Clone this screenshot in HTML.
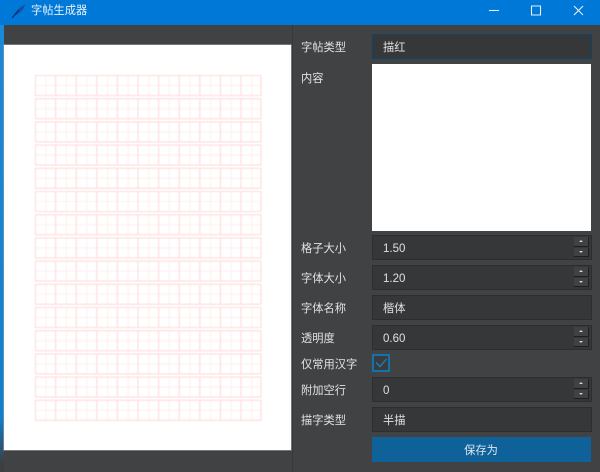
<!DOCTYPE html>
<html lang="zh">
<head>
<meta charset="utf-8">
<style>
html,body{margin:0;padding:0;width:600px;height:472px;overflow:hidden;background:#414243}
body{position:relative;font-family:"Liberation Sans","Noto Sans CJK SC",sans-serif;font-size:11.25px;color:#e4e4e4}
#wrap{position:absolute;left:0;top:0;width:600px;height:472px;filter:blur(.3px)}
.a{position:absolute}
#title{left:0;top:0;width:600px;height:25px;background:#0078d7}
#edge{left:0;top:25px;width:4px;height:447px;background:linear-gradient(#1a8ad8,#0f7fcf 88%,#3b3f42 98%)}
#ttxt{left:31px;top:1px;line-height:20px;color:#e8f2fb}
#paper{left:4px;top:45px;width:287px;height:405px;background:#fff;box-shadow:0 0 0 .6px #999}
#split{left:292px;top:25px;width:1px;height:447px;background:#38393a}
.lbl{left:301px;line-height:20px;color:#e2e2e2;white-space:nowrap}
.in{left:372px;width:218px;background:#363738;border:1px solid #2c2d2e;line-height:26px;color:#e0e0e0;text-indent:10px}
.num{font-size:11.5px}
.spin{position:absolute;right:2px;top:1px;width:15px;bottom:1px}
.spin i{position:absolute;left:0;width:14px;height:8px;background:#404142;border-right:1px solid #1d1e1f;border-bottom:1px solid #1d1e1f}
.spin i:first-child{top:0;height:9px}.spin i:last-child{top:11px}
.spin b{position:absolute;left:5px;top:3px;width:0;height:0;border-left:2px solid transparent;border-right:2px solid transparent}
.spin i:first-child b{border-bottom:2px solid #d4d4d4}
.spin i:last-child b{border-top:2px solid #d4d4d4}
#btn{left:372px;top:437px;width:219px;height:25px;background:#0e6199;line-height:28px;text-align:center;color:#dfe8ef;text-indent:-1px}
#chk{left:372px;top:354px;width:14px;height:14px;border:2px solid #1272ab;background:#3a3b3c}
svg{display:block}
</style>
</head>
<body>
<div id="wrap">
<div class="a" id="title"></div>
<div class="a" id="edge"></div>
<svg class="a" style="left:11px;top:3px" width="16" height="16" viewBox="0 0 16 16"><path d="M1.500 14.500C4 9 8 4.500 14 1.500C13 6 9 10.500 3.500 13Z" fill="#1450a0"/><path d="M1 15L8 7" stroke="#0a3070" stroke-width="1"/></svg>
<div class="a" id="ttxt">字帖生成器</div>
<svg class="a" style="left:480px;top:0" width="120" height="25" viewBox="0 0 120 25" fill="none" stroke="#e6f1fa" stroke-width="1.100"><path d="M9 10.500H19"/><path d="M51.500 6H60.500V15H51.500Z"/><path d="M94 6L103 15M103 6L94 15"/></svg>
<div class="a" id="paper"></div>
<svg class="a" style="left:35px;top:75px;filter:blur(.4px)" width="228" height="348" viewBox="0 0 228 348" fill="none">
<defs>
<g id="r">
<path d="M0.500 10.500H226M10.800 0.500V20.500M31.400 0.500V20.500M52 0.500V20.500M72.600 0.500V20.500M93.200 0.500V20.500M113.800 0.500V20.500M134.400 0.500V20.500M155 0.500V20.500M175.600 0.500V20.500M196.200 0.500V20.500M216.800 0.500V20.500" stroke="#fff0f0" stroke-width="1.100"/>
<path d="M0.500 0.500H226V20.500H0.500ZM20.600 0.500V20.500M41.200 0.500V20.500M61.800 0.500V20.500M82.400 0.500V20.500M103 0.500V20.500M123.600 0.500V20.500M144.200 0.500V20.500M164.800 0.500V20.500M185.400 0.500V20.500M206 0.500V20.500" stroke="#ffdada" stroke-width="1.100"/>
</g>
</defs>
<use href="#r" y="0"/><use href="#r" y="23.200"/><use href="#r" y="46.400"/><use href="#r" y="69.600"/><use href="#r" y="92.800"/><use href="#r" y="116"/><use href="#r" y="139.200"/><use href="#r" y="162.400"/><use href="#r" y="185.600"/><use href="#r" y="208.800"/><use href="#r" y="232"/><use href="#r" y="255.200"/><use href="#r" y="278.400"/><use href="#r" y="301.600"/><use href="#r" y="324.800"/>
</svg>
<div class="a" id="split"></div>

<div class="a lbl" style="top:38px">字帖类型</div>
<div class="a in" style="top:34px;height:23px;line-height:26px;border-color:#0e4468">描红</div>
<div class="a lbl" style="top:69px">内容</div>
<div class="a" style="left:372px;top:64px;width:219px;height:167px;background:#fff"></div>

<div class="a lbl" style="top:239px">格子大小</div>
<div class="a in num" style="top:235px;height:23px">1.50<div class="spin"><i><b></b></i><i><b></b></i></div></div>
<div class="a lbl" style="top:269px">字体大小</div>
<div class="a in num" style="top:265px;height:23px">1.20<div class="spin"><i><b></b></i><i><b></b></i></div></div>
<div class="a lbl" style="top:299px">字体名称</div>
<div class="a in" style="top:295px;height:23px">楷体</div>
<div class="a lbl" style="top:329px">透明度</div>
<div class="a in num" style="top:325px;height:23px">0.60<div class="spin"><i><b></b></i><i><b></b></i></div></div>
<div class="a lbl" style="top:355px">仅常用汉字</div>
<div class="a" id="chk"><svg width="14" height="14" viewBox="0 0 14 14" fill="none"><path d="M2 6.500L6 10.500L12.500 3" stroke="#1a80bf" stroke-width="1.300"/></svg></div>
<div class="a lbl" style="top:381px">附加空行</div>
<div class="a in num" style="top:377px;height:23px">0<div class="spin"><i><b></b></i><i><b></b></i></div></div>
<div class="a lbl" style="top:411px">描字类型</div>
<div class="a in" style="top:407px;height:23px">半描</div>
<div class="a" id="btn">保存为</div>
</div>
</body>
</html>
